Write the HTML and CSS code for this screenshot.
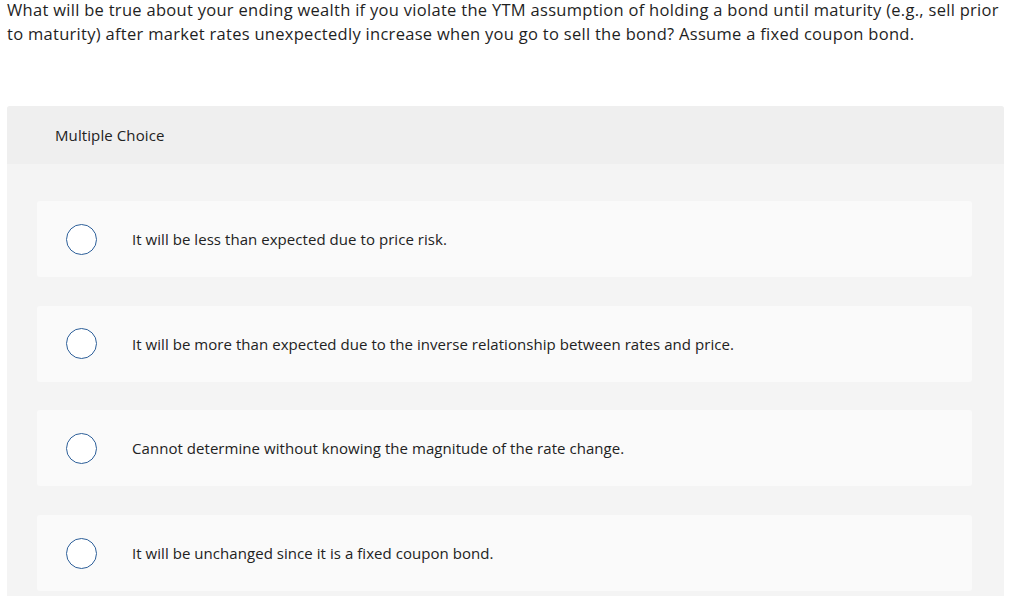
FILE: index.html
```html
<!DOCTYPE html>
<html lang="en">
<head>
<meta charset="utf-8">
<title>Multiple Choice</title>
<link rel="stylesheet" href="styles.css">
</head>
<body>
<div class="page">
  <p class="question">What will be true about your ending wealth if you violate the YTM assumption of holding a bond until maturity (e.g., sell prior to maturity) after market rates unexpectedly increase when you go to sell the bond? Assume a fixed coupon bond.</p>
  <section class="panel">
    <header class="panel-head">Multiple Choice</header>
    <div class="panel-body">
      <label class="option"><span class="radio"></span><span class="opt-text">It will be less than expected due to price risk.</span></label>
      <label class="option"><span class="radio"></span><span class="opt-text">It will be more than expected due to the inverse relationship between rates and price.</span></label>
      <label class="option"><span class="radio"></span><span class="opt-text">Cannot determine without knowing the magnitude of the rate change.</span></label>
      <label class="option"><span class="radio"></span><span class="opt-text">It will be unchanged since it is a fixed coupon bond.</span></label>
    </div>
  </section>
</div>
</body>
</html>
```

FILE: styles.css
```css
html, body {
  margin: 0;
  padding: 0;
  background: #ffffff;
}
body {
  font-family: "Open Sans", "Liberation Sans", sans-serif;
  color: #222222;
  overflow: hidden;
}
.page {
  width: 997px;
  padding-left: 7px;
}
.question {
  margin: -2px 0 0 0;
  font-size: 16.5px;
  letter-spacing: 0.29px;
  line-height: 24px;
  color: #1f1f1f;
}
.panel {
  margin-top: 60px;
  border-radius: 3px 3px 0 0;
  overflow: hidden;
  background: #f4f4f4;
}
.panel-head {
  height: 58px;
  display: flex;
  align-items: center;
  padding-left: 48px;
  background: #efefef;
  font-size: 15px;
  letter-spacing: 0.1px;
  color: #222222;
}
.panel-body {
  display: flex;
  flex-direction: column;
  gap: 28.7px;
  padding: 37px 32px 20px 30px;
}
.option {
  height: 76px;
  display: flex;
  align-items: center;
  padding-left: 29px;
  background: #fafafa;
  border-radius: 3px;
}
.radio {
  width: 29px;
  height: 29px;
  flex: none;
  border: 1.5px solid #2d5f99;
  border-radius: 50%;
  background: #ffffff;
}
.opt-text {
  margin-left: 35px;
  font-size: 15px;
  letter-spacing: 0.05px;
  color: #222222;
}
```
